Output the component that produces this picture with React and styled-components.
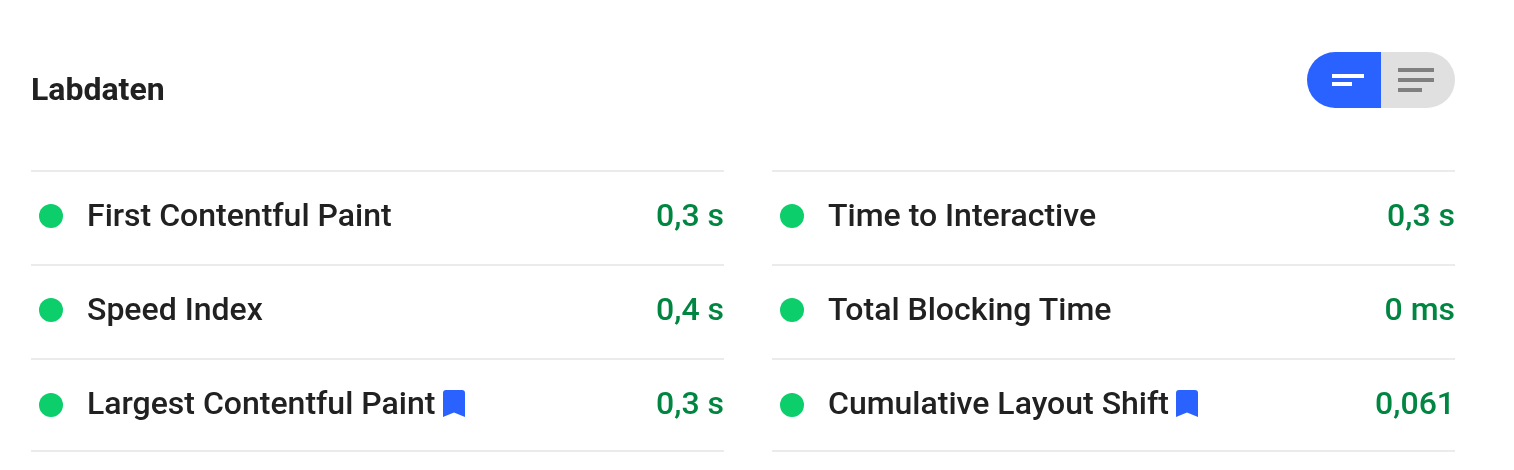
import styled, { createGlobalStyle } from "styled-components"

const Global = createGlobalStyle`
html, body {
  margin: 0;
  padding: 0;
  background: #fff;
  font-family: Roboto, "Liberation Sans", sans-serif;
}
`

const Page = styled.div`
width: 1514px;
height: 470px;
box-sizing: border-box;
padding: 52px 59px 0 31px;
overflow: hidden;
will-change: transform;
`

const Header = styled.div`
display: flex;
align-items: flex-end;
justify-content: space-between;
height: 56px;
margin-bottom: 62px;
`

const Title = styled.div`
font-size: 32px;
font-weight: 700;
color: #212121;
`

const Toggle = styled.div`
display: flex;
width: 148px;
height: 56px;
border-radius: 28px;
overflow: hidden;
`

const ToggleSide = styled.div`
display: flex;
align-items: center;
width: 74px;
box-sizing: border-box;
padding-left: ${p => p.$active ? 25 : 17}px;
background: ${p => p.$active ? "#2962ff" : "#e0e0e0"};
`

const Columns = styled.div`
display: grid;
grid-template-columns: 693px 683px;
column-gap: 48px;
`

const Column = styled.div`
border-top: 2px solid #ebebeb;
`

const Row = styled.div`
display: flex;
align-items: center;
height: ${p => p.$last ? 92 : 94}px;
border-bottom: 2px solid #ebebeb;
box-sizing: border-box;
padding-left: 8px;
padding-bottom: ${p => p.$last ? 0 : 4}px;
`

const Dot = styled.span`
width: 24px;
height: 24px;
border-radius: 50%;
background: #0cce6b;
flex: none;
margin-right: 24px;
`

const Label = styled.span`
font-size: 32px;
line-height: 36px;
font-weight: 500;
color: #212121;
flex: 1;
display: flex;
align-items: center;
margin-bottom: ${p => p.$last ? 4 : 2}px;
`

const Value = styled.span`
font-size: 32px;
line-height: 36px;
font-weight: 500;
color: #018642;
margin-bottom: ${p => p.$last ? 4 : 2}px;
`

const Mark = styled.svg`
width: 22px;
height: 27px;
margin-left: 7.500px;
margin-top: 1px;
flex: none;
`

const Bookmark = () => (
  <Mark viewBox="0 0 22 27">
    <path d="M3 0h16a3 3 0 0 1 3 3v24l-11-4.500L0 27V3a3 3 0 0 1 3-3z" fill="#2962ff" />
  </Mark>
)

const left = [
  { label: "First Contentful Paint", value: "0,3 s" },
  { label: "Speed Index", value: "0,4 s" },
  { label: "Largest Contentful Paint", value: "0,3 s", last: true },
]

const right = [
  { label: "Time to Interactive", value: "0,3 s" },
  { label: "Total Blocking Time", value: "0 ms" },
  { label: "Cumulative Layout Shift", value: "0,061", last: true },
]

const Metrics = ({ items }) => (
  <Column>
    {items.map(item => (
      <Row key={item.label} $last={item.last}>
        <Dot />
        <Label $last={item.last}>
          {item.label}
          {item.last && <Bookmark />}
        </Label>
        <Value $last={item.last}>{item.value}</Value>
      </Row>
    ))}
  </Column>
)

const App = () => {
  return (
    <Page>
      <Global />
      <Header>
        <Title>Labdaten</Title>
        <Toggle>
          <ToggleSide $active>
            <svg width="32" height="12" viewBox="0 0 32 12">
              <path d="M0 0h32v4H0zM0 8h20v4H0z" fill="#fff" />
            </svg>
          </ToggleSide>
          <ToggleSide>
            <svg width="36" height="24" viewBox="0 0 36 24">
              <path d="M0 0h36v4H0zM0 10h36v4H0zM0 20h24v4H0z" fill="#808080" />
            </svg>
          </ToggleSide>
        </Toggle>
      </Header>
      <Columns>
        <Metrics items={left} />
        <Metrics items={right} />
      </Columns>
    </Page>
  )
}

export default App
